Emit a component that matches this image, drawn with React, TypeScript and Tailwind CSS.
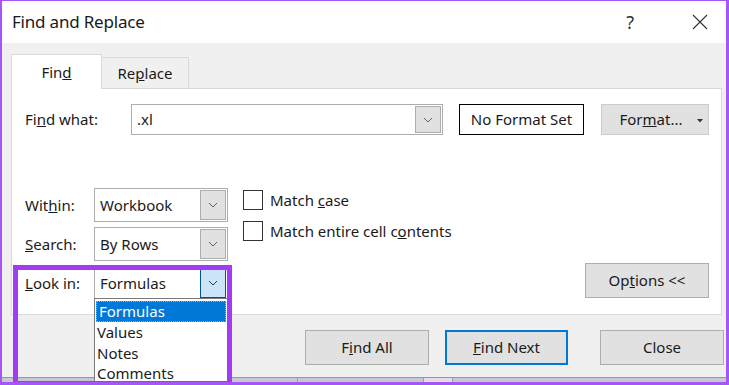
import React from "react"

const font = { fontFamily: '"Noto Sans", "Open Sans", sans-serif' }

const Chevron = ({ color = "#5f5f5f" }: { color?: string }) => (
  <svg width="10" height="6" viewBox="0 0 10 6" fill="none">
    <polyline points="1,1 5,5 9,1" stroke={color} strokeWidth="1" />
  </svg>
)

const Combo = ({ value, active = false }: { value: string; active?: boolean }) => (
  <div className="flex h-[34px] w-[134px] items-stretch border border-[#adadad] bg-white p-px">
    <div className="flex flex-1 items-center pl-[4px] text-[15px] text-[#1a1a1a]">{value}</div>
    <div
      className={
        active
          ? "flex w-[26px] items-center justify-center border border-[#005499] bg-[#cce4f7]"
          : "flex w-[26px] items-center justify-center border border-[#adadad] bg-[#e1e1e1]"
      }
    >
      <Chevron color={active ? "#1d3b57" : "#5f5f5f"} />
    </div>
  </div>
)

const Checkbox = ({ children }: { children: React.ReactNode }) => (
  <div className="flex h-[20px] items-center gap-[7px]">
    <div className="h-[20px] w-[20px] border border-[#333333] bg-white" />
    <span className="text-[15px] leading-[20px] text-[#1a1a1a]">{children}</span>
  </div>
)

const Button = ({ children, width, primary = false }: { children: React.ReactNode; width: string; primary?: boolean }) => (
  <div
    className={
      primary
        ? `flex h-[35px] ${width} items-center justify-center border-2 border-[#0078d7] bg-[#e1e1e1] text-[15px] text-[#1a1a1a]`
        : `flex h-[35px] ${width} items-center justify-center border border-[#adadad] bg-[#e1e1e1] text-[15px] text-[#1a1a1a]`
    }
  >
    {children}
  </div>
)

export default function App() {
  return (
    <div
      className="relative h-[385px] w-[729px] overflow-hidden border-t border-r-[3px] border-b-[3px] border-l-2 border-[#a855f7] bg-white"
      style={font}
    >
      <div className="flex h-full flex-col">
        {/* title bar */}
        <div className="flex h-[42px] shrink-0 items-center bg-white pl-[10px] text-[17px] text-[#1a1a1a]">
          <span className="tracking-[-0.2px]">Find and Replace</span>
          <span className="ml-auto mr-[58px] text-[18px] text-[#333]">?</span>
          <svg width="16" height="16" viewBox="0 0 16 16" className="mr-[18px]">
            <path d="M1 1 L15 15 M15 1 L1 15" stroke="#333" strokeWidth="1.1" />
          </svg>
        </div>

        {/* body */}
        <div className="flex flex-1 flex-col bg-[#f0f0f0] pl-[9px]">
          <div className="relative z-10 mt-[11px] flex items-end">
            <div className="-mb-px flex h-[35px] w-[91px] items-center justify-center border border-b-0 border-[#d9d9d9] bg-white text-[15px] text-[#1a1a1a]">
              Fin<u>d</u>
            </div>
            <div className="flex h-[31px] w-[87px] items-center justify-center border-t border-r border-[#d9d9d9] bg-[#f0f0f0] text-[15px] text-[#1a1a1a]">
              Re<u>p</u>lace
            </div>
          </div>

          <div className="h-[227px] w-[711px] border border-[#d9d9d9] bg-white pt-[15px] pl-[13px]">
            {/* find what */}
            <div className="flex items-center">
              <span className="w-[106px] text-[15px] text-[#1a1a1a]">
                Fi<u>n</u>d what:
              </span>
              <div className="flex h-[31px] w-[312px] items-stretch border border-[#adadad] bg-white p-px">
                <div className="flex flex-1 items-center pl-[4px] text-[15px] text-[#1a1a1a]">.xl</div>
                <div className="flex w-[26px] items-center justify-center border border-[#adadad] bg-[#e1e1e1]">
                  <Chevron />
                </div>
              </div>
              <div className="ml-[16px] flex h-[31px] w-[125px] items-center justify-center border border-black text-[15px] text-[#1a1a1a]">
                No Format Set
              </div>
              <div className="relative ml-[17px] flex h-[31px] w-[108px] items-center justify-center border border-[#cccccc] bg-[#e1e1e1] text-[15px] text-[#1a1a1a]">
                <span className="mr-[8px]">
                  For<u>m</u>at...
                </span>
                <svg width="6" height="4" viewBox="0 0 6 4" className="absolute right-[5px] top-[14px]">
                  <polygon points="0,0 6,0 3,3.5" fill="#333" />
                </svg>
              </div>
            </div>

            {/* options area */}
            <div className="mt-[53px] flex">
              <div className="flex flex-col gap-[5px]">
                <div className="flex items-center">
                  <span className="w-[69px] text-[15px] text-[#1a1a1a]">
                    Wit<u>h</u>in:
                  </span>
                  <Combo value="Workbook" />
                </div>
                <div className="flex items-center">
                  <span className="w-[69px] text-[15px] text-[#1a1a1a]">
                    <u>S</u>earch:
                  </span>
                  <Combo value="By Rows" />
                </div>
                <div className="flex items-center">
                  <span className="w-[69px] text-[15px] text-[#1a1a1a]">
                    <u>L</u>ook in:
                  </span>
                  <Combo value="Formulas" active />
                </div>
              </div>

              <div className="ml-[15px] mt-[2px] flex flex-col gap-[11px]">
                <Checkbox>
                  Match <u>c</u>ase
                </Checkbox>
                <Checkbox>
                  Match entire cell c<u>o</u>ntents
                </Checkbox>
              </div>

              <div className="ml-auto mr-[12px] mt-[75px]">
                <Button width="w-[124px]">
                  Op<u>t</u>ions &lt;&lt;
                </Button>
              </div>
            </div>
          </div>

          {/* bottom buttons */}
          <div className="mt-[15px] flex pl-[294px]">
            <Button width="w-[124px]">
              F<u>i</u>nd All
            </Button>
            <div className="ml-[16px]">
              <Button width="w-[123px]" primary>
                <u>F</u>ind Next
              </Button>
            </div>
            <div className="ml-[32px]">
              <Button width="w-[124px]">Close</Button>
            </div>
          </div>
        </div>

        {/* strip of the sheet behind */}
        <div className="flex h-[5px] shrink-0 border-t border-[#8f98a6] bg-[#c3cad5]">
          <div className="w-[296px] border-r border-[#9aa3b0]" />
          <div className="w-[126px] border-r border-[#9aa3b0]" />
          <div className="w-[29px] border-r border-[#9aa3b0] bg-[#e4dde3]" />
          <div className="flex-1" />
        </div>
      </div>

      {/* open dropdown list */}
      <div className="absolute left-[92px] top-[297px] z-20 w-[134px] border border-[#7a7a7a] bg-white text-[15px] leading-[21px] text-[#1a1a1a]">
        <div className="mx-px mt-[2px] border border-dotted border-[#7fb3e6] bg-[#0078d7] pl-[2px] leading-[19px] text-white">Formulas</div>
        <div className="pl-[2px]">Values</div>
        <div className="pl-[2px]">Notes</div>
        <div className="pl-[2px] leading-[19px]">Comments</div>
      </div>

      {/* annotation highlight */}
      <div className="absolute left-[11px] top-[264px] z-30 h-[121px] w-[219px] border-[5px] border-[#a23bf4]" />
    </div>
  )
}
